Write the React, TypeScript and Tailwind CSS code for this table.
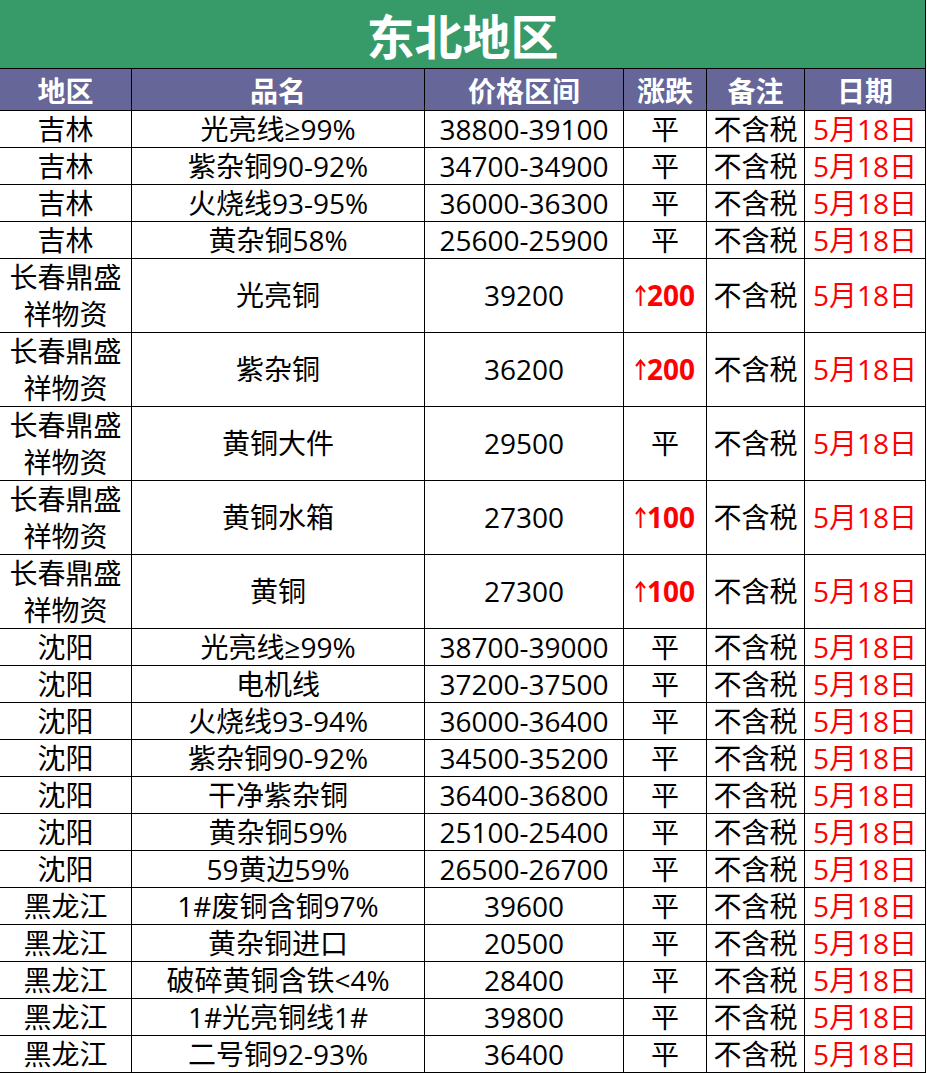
import React from "react";

type Row = {
  region: string;
  name: string;
  price: string;
  change?: string;
  tall?: boolean;
};

const rows: Row[] = [
  { region: "吉林", name: "光亮线≥99%", price: "38800-39100" },
  { region: "吉林", name: "紫杂铜90-92%", price: "34700-34900" },
  { region: "吉林", name: "火烧线93-95%", price: "36000-36300" },
  { region: "吉林", name: "黄杂铜58%", price: "25600-25900" },
  { region: "长春鼎盛祥物资", name: "光亮铜", price: "39200", change: "200", tall: true },
  { region: "长春鼎盛祥物资", name: "紫杂铜", price: "36200", change: "200", tall: true },
  { region: "长春鼎盛祥物资", name: "黄铜大件", price: "29500", tall: true },
  { region: "长春鼎盛祥物资", name: "黄铜水箱", price: "27300", change: "100", tall: true },
  { region: "长春鼎盛祥物资", name: "黄铜", price: "27300", change: "100", tall: true },
  { region: "沈阳", name: "光亮线≥99%", price: "38700-39000" },
  { region: "沈阳", name: "电机线", price: "37200-37500" },
  { region: "沈阳", name: "火烧线93-94%", price: "36000-36400" },
  { region: "沈阳", name: "紫杂铜90-92%", price: "34500-35200" },
  { region: "沈阳", name: "干净紫杂铜", price: "36400-36800" },
  { region: "沈阳", name: "黄杂铜59%", price: "25100-25400" },
  { region: "沈阳", name: "59黄边59%", price: "26500-26700" },
  { region: "黑龙江", name: "1#废铜含铜97%", price: "39600" },
  { region: "黑龙江", name: "黄杂铜进口", price: "20500" },
  { region: "黑龙江", name: "破碎黄铜含铁<4%", price: "28400" },
  { region: "黑龙江", name: "1#光亮铜线1#", price: "39800" },
  { region: "黑龙江", name: "二号铜92-93%", price: "36400" },
];

const headers = ["地区", "品名", "价格区间", "涨跌", "备注", "日期"];

// thin up arrow as in the sheet
const UpArrow = () => (
  <svg width="11" height="22" viewBox="0 0 11 22" className="mr-[1px]">
    <path d="M5.5 1.5 V21" stroke="#ff0000" strokeWidth="2" fill="none" />
    <path d="M1 7 L5.5 1.5 L10 7" stroke="#ff0000" strokeWidth="2" fill="none" />
  </svg>
);

const App = () => {
  return (
    <div className="w-[927px] bg-white font-[family-name:'Open_Sans','Noto_Sans_CJK_SC',sans-serif] text-[28px] text-black">
      <div className="w-[926px] border-r border-black">
        <div className="h-[69px] border-b border-black bg-[#369a69] flex items-center justify-center">
          <h1 className="text-[48px] font-bold text-white leading-none font-[family-name:'Noto_Sans_CJK_SC',sans-serif]">
            东北地区
          </h1>
        </div>
        <div className="grid grid-cols-[131px_292px_198px_82px_97px_120px] gap-px bg-black border-b border-black">
          {headers.map((h) => (
            <div
              key={h}
              className="h-[41px] bg-[#666699] flex items-center justify-center text-white font-bold font-[family-name:'Noto_Sans_CJK_SC',sans-serif]"
            >
              {h}
            </div>
          ))}
          {rows.map((r, i) => {
            const h = r.tall ? "h-[73px]" : "h-[36px]";
            const cell = `${h} bg-white flex items-center justify-center text-center leading-[37px]`;
            return (
              <React.Fragment key={i}>
                <div className={`${cell} ${r.tall ? "px-1" : ""}`}>
                  <span className={r.tall ? "block w-[114px] break-all" : ""}>{r.region}</span>
                </div>
                <div className={`${cell} whitespace-nowrap`}>{r.name}</div>
                <div className={`${cell} whitespace-nowrap`}>{r.price}</div>
                <div className={`${cell} whitespace-nowrap`}>
                  {r.change ? (
                    <span className="flex items-center text-[#ff0000] font-bold">
                      <UpArrow />
                      {r.change}
                    </span>
                  ) : (
                    "平"
                  )}
                </div>
                <div className={`${cell} whitespace-nowrap`}>不含税</div>
                <div className={`${cell} whitespace-nowrap text-[#ff0000]`}>5月18日</div>
              </React.Fragment>
            );
          })}
        </div>
      </div>
    </div>
  );
};

export default App;
